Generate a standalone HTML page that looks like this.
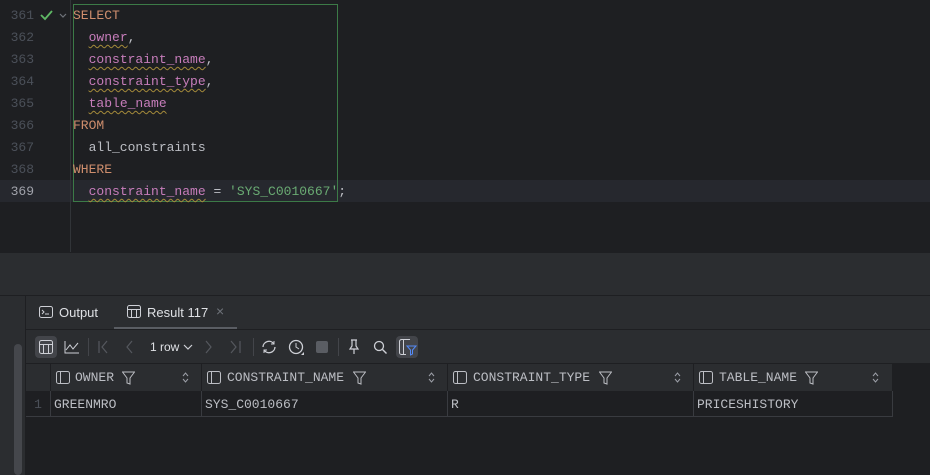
<!DOCTYPE html><html><head><style>
*{margin:0;padding:0;box-sizing:border-box}
body{width:930px;height:475px;background:#1e1f22;position:relative;overflow:hidden;font-family:"Liberation Sans",sans-serif}
.mono{font-family:"Liberation Mono",monospace;font-size:13px}
.ln{position:absolute;left:0;width:34px;text-align:right;color:#4b5059;font-family:"Liberation Mono",monospace;font-size:13px;line-height:22px}
.code{position:absolute;left:73px;line-height:22px;white-space:pre;color:#bcbec4}
.k{color:#cf8e6d}.c{color:#c77dbb;text-decoration:underline wavy #a48a3a;text-decoration-thickness:1px;text-underline-offset:3px}.s{color:#6aab73}
.abs{position:absolute}
.th{position:absolute;top:364px;height:27px;background:#2b2d30;color:#bcbec4;line-height:27px;border-right:1px solid #1e1f22}
.th svg{position:absolute;top:7px}
.td{position:absolute;top:391px;height:26px;line-height:27px;color:#bcbec4;border-right:1px solid #393b40;border-bottom:1px solid #393b40}
.ico{position:absolute;color:#ced0d6}
</style></head><body>
<div class="abs" style="left:0;top:180px;width:930px;height:22px;background:#26282e"></div>
<div class="abs" style="left:70px;top:0;width:1px;height:252px;background:#313438"></div>
<div class="ln" style="top:5px">361<br>362<br>363<br>364<br>365<br>366<br>367<br>368<br><span style="color:#a1a3ab">369</span></div>
<svg class="abs" style="left:40px;top:9px" width="30" height="14"><path d="M1 6l4 4 7-8" stroke="#5fb865" stroke-width="1.8" fill="none"/><path d="M20 5l3 3 3-3" stroke="#6f737a" stroke-width="1.2" fill="none"/></svg>
<div class="abs" style="left:73px;top:4px;width:265px;height:198px;border:1px solid #3c7a47"></div>
<div class="code mono" style="top:5px"><span class="k">SELECT</span>
  <span class="c">owner</span>,
  <span class="c">constraint_name</span>,
  <span class="c">constraint_type</span>,
  <span class="c">table_name</span>
<span class="k">FROM</span>
  all_constraints
<span class="k">WHERE</span>
  <span class="c">constraint_name</span> = <span class="s">'SYS_C0010667'</span>;</div>
<div class="abs" style="left:0;top:252px;width:930px;height:43px;background:#2b2d30;border-top:1px solid #1e1f22"></div>
<div class="abs" style="left:0;top:295px;width:930px;height:1px;background:#1e1f22"></div>
<div class="abs" style="left:0;top:296px;width:26px;height:179px;background:#2b2d30;border-right:1px solid #1e1f22"></div>
<div class="abs" style="left:14px;top:344px;width:8px;height:131px;background:#45474c;border-radius:4px"></div>
<div class="abs" style="left:26px;top:296px;width:904px;height:67px;background:#2b2d30"></div>
<div class="abs" style="left:26px;top:329px;width:904px;height:1px;background:#1e1f22"></div>
<div class="abs" style="left:114px;top:327px;width:123px;height:2px;background:#5a5d63"></div>
<svg class="abs" style="left:39px;top:306px" width="14" height="12"><rect x=".5" y=".5" width="13" height="11" rx="2" stroke="#ced0d6" fill="none"/><path d="M3 4l2 2-2 2M6 8h4" stroke="#ced0d6" fill="none"/></svg>
<div class="abs" style="left:59px;top:305px;color:#dfe1e5;font-size:13px">Output</div>
<svg class="abs" style="left:127px;top:305px" width="14" height="13"><rect x=".5" y=".5" width="13" height="12" rx="2" stroke="#ced0d6" fill="none"/><path d="M0 4.5h14M4.5 4v9M9.5 4v9" stroke="#ced0d6"/></svg>
<div class="abs" style="left:147px;top:305px;color:#dfe1e5;font-size:13px">Result 117</div>
<div class="abs" style="left:216px;top:303px;color:#6f737a;font-size:14px">×</div>
<div class="abs" style="left:35px;top:336px;width:22px;height:22px;background:#43454a;border-radius:4px"></div>
<svg class="abs" style="left:39px;top:340px" width="14" height="14"><rect x=".5" y=".5" width="13" height="13" rx="2" stroke="#ced0d6" fill="none"/><path d="M0 4.5h14M4.5 4v10M9.5 4v10" stroke="#ced0d6"/></svg>
<svg class="abs" style="left:64px;top:340px" width="16" height="14"><path d="M1 1v12h14" stroke="#ced0d6" fill="none"/><path d="M2 10l4-5 3 4 5-6" stroke="#ced0d6" fill="none"/></svg>
<div class="abs" style="left:88px;top:338px;width:1px;height:18px;background:#43454a"></div>
<svg class="abs" style="left:98px;top:340px" width="40" height="14"><path d="M1 1v12M9 1L4 7l5 6M34 1l-5 6 5 6" stroke="#55585e" fill="none" stroke-width="1.2"/></svg>
<div class="abs" style="left:150px;top:340px;color:#dfe1e5;font-size:12px">1 row</div>
<svg class="abs" style="left:183px;top:344px" width="10" height="6"><path d="M1 1l4 4 4-4" stroke="#ced0d6" fill="none" stroke-width="1.2"/></svg>
<svg class="abs" style="left:205px;top:340px" width="40" height="14"><path d="M1 1l5 6-5 6M26 1l5 6-5 6M35 1v12" stroke="#55585e" fill="none" stroke-width="1.2"/></svg>
<div class="abs" style="left:253px;top:338px;width:1px;height:18px;background:#43454a"></div>
<svg class="abs" style="left:261px;top:339px" width="16" height="16"><path d="M2 8a6 6 0 0 1 11-3M14 8a6 6 0 0 1-11 3" stroke="#ced0d6" fill="none" stroke-width="1.3"/><path d="M10 5h3V2M6 11H3v3" stroke="#ced0d6" fill="none"/></svg>
<svg class="abs" style="left:288px;top:339px" width="18" height="18"><circle cx="8" cy="8" r="6.5" stroke="#ced0d6" fill="none" stroke-width="1.3"/><path d="M8 4v4l3 2" stroke="#ced0d6" fill="none"/><path d="M13 16l3-3v3z" fill="#ced0d6"/></svg>
<div class="abs" style="left:316px;top:341px;width:12px;height:12px;background:#5a5d63;border-radius:2px"></div>
<div class="abs" style="left:338px;top:338px;width:1px;height:18px;background:#43454a"></div>
<svg class="abs" style="left:347px;top:339px" width="14" height="16"><path d="M4 1h6M5 1v6l-2 3h8l-2-3V1M7 10v5" stroke="#ced0d6" fill="none" stroke-width="1.2"/></svg>
<svg class="abs" style="left:373px;top:340px" width="15" height="15"><circle cx="6" cy="6" r="4.5" stroke="#ced0d6" fill="none" stroke-width="1.3"/><path d="M9.5 9.5l4 4" stroke="#ced0d6" stroke-width="1.4"/></svg>
<div class="abs" style="left:396px;top:336px;width:22px;height:22px;background:#43454a;border-radius:4px"></div>
<svg class="abs" style="left:399px;top:339px" width="18" height="17"><path d="M11 .5H2.5a2 2 0 0 0-2 2v11a2 2 0 0 0 2 2H7M4.5 1v14" stroke="#ced0d6" fill="none"/><path d="M8 7h9l-3.5 4v4l-2 1v-5z" stroke="#548af7" fill="none"/></svg>
<div class="abs" style="left:26px;top:363px;width:867px;height:1px;background:#1e1f22"></div>
<div class="th" style="left:26px;width:25px"></div>
<div class="th mono" style="left:51px;width:151px"><svg style="left:5px" width="14" height="13"><rect x=".5" y=".5" width="13" height="12" rx="2" stroke="#bcbec4" fill="none"/><path d="M4.5 1v11" stroke="#bcbec4"/></svg><span style="position:absolute;left:24px">OWNER</span><svg style="left:71px" width="13" height="14"><path d="M.5 1h12L8 7v6L5 12V7z" stroke="#bcbec4" fill="none"/></svg></div>
<div class="th mono" style="left:202px;width:246px"><svg style="left:5px" width="14" height="13"><rect x=".5" y=".5" width="13" height="12" rx="2" stroke="#bcbec4" fill="none"/><path d="M4.5 1v11" stroke="#bcbec4"/></svg><span style="position:absolute;left:25px">CONSTRAINT_NAME</span><svg style="left:151px" width="13" height="14"><path d="M.5 1h12L8 7v6L5 12V7z" stroke="#bcbec4" fill="none"/></svg></div>
<div class="th mono" style="left:448px;width:246px"><svg style="left:5px" width="14" height="13"><rect x=".5" y=".5" width="13" height="12" rx="2" stroke="#bcbec4" fill="none"/><path d="M4.5 1v11" stroke="#bcbec4"/></svg><span style="position:absolute;left:25px">CONSTRAINT_TYPE</span><svg style="left:151px" width="13" height="14"><path d="M.5 1h12L8 7v6L5 12V7z" stroke="#bcbec4" fill="none"/></svg></div>
<div class="th mono" style="left:694px;width:199px"><svg style="left:5px" width="14" height="13"><rect x=".5" y=".5" width="13" height="12" rx="2" stroke="#bcbec4" fill="none"/><path d="M4.5 1v11" stroke="#bcbec4"/></svg><span style="position:absolute;left:25px">TABLE_NAME</span><svg style="left:111px" width="13" height="14"><path d="M.5 1h12L8 7v6L5 12V7z" stroke="#bcbec4" fill="none"/></svg></div>
<svg class="abs" style="left:182px;top:372px" width="7" height="11"><path d="M1 4l2.5-3L6 4M1 7l2.5 3L6 7" stroke="#9da0a8" fill="none"/></svg>
<svg class="abs" style="left:428px;top:372px" width="7" height="11"><path d="M1 4l2.5-3L6 4M1 7l2.5 3L6 7" stroke="#9da0a8" fill="none"/></svg>
<svg class="abs" style="left:674px;top:372px" width="7" height="11"><path d="M1 4l2.5-3L6 4M1 7l2.5 3L6 7" stroke="#9da0a8" fill="none"/></svg>
<svg class="abs" style="left:872px;top:372px" width="7" height="11"><path d="M1 4l2.5-3L6 4M1 7l2.5 3L6 7" stroke="#9da0a8" fill="none"/></svg>
<div class="td mono" style="left:26px;width:25px;color:#4b5059;text-align:center">1</div>
<div class="td mono" style="left:51px;width:151px;padding-left:3px">GREENMRO</div>
<div class="td mono" style="left:202px;width:246px;padding-left:3px">SYS_C0010667</div>
<div class="td mono" style="left:448px;width:246px;padding-left:3px">R</div>
<div class="td mono" style="left:694px;width:199px;padding-left:3px">PRICESHISTORY</div>
</body></html>
